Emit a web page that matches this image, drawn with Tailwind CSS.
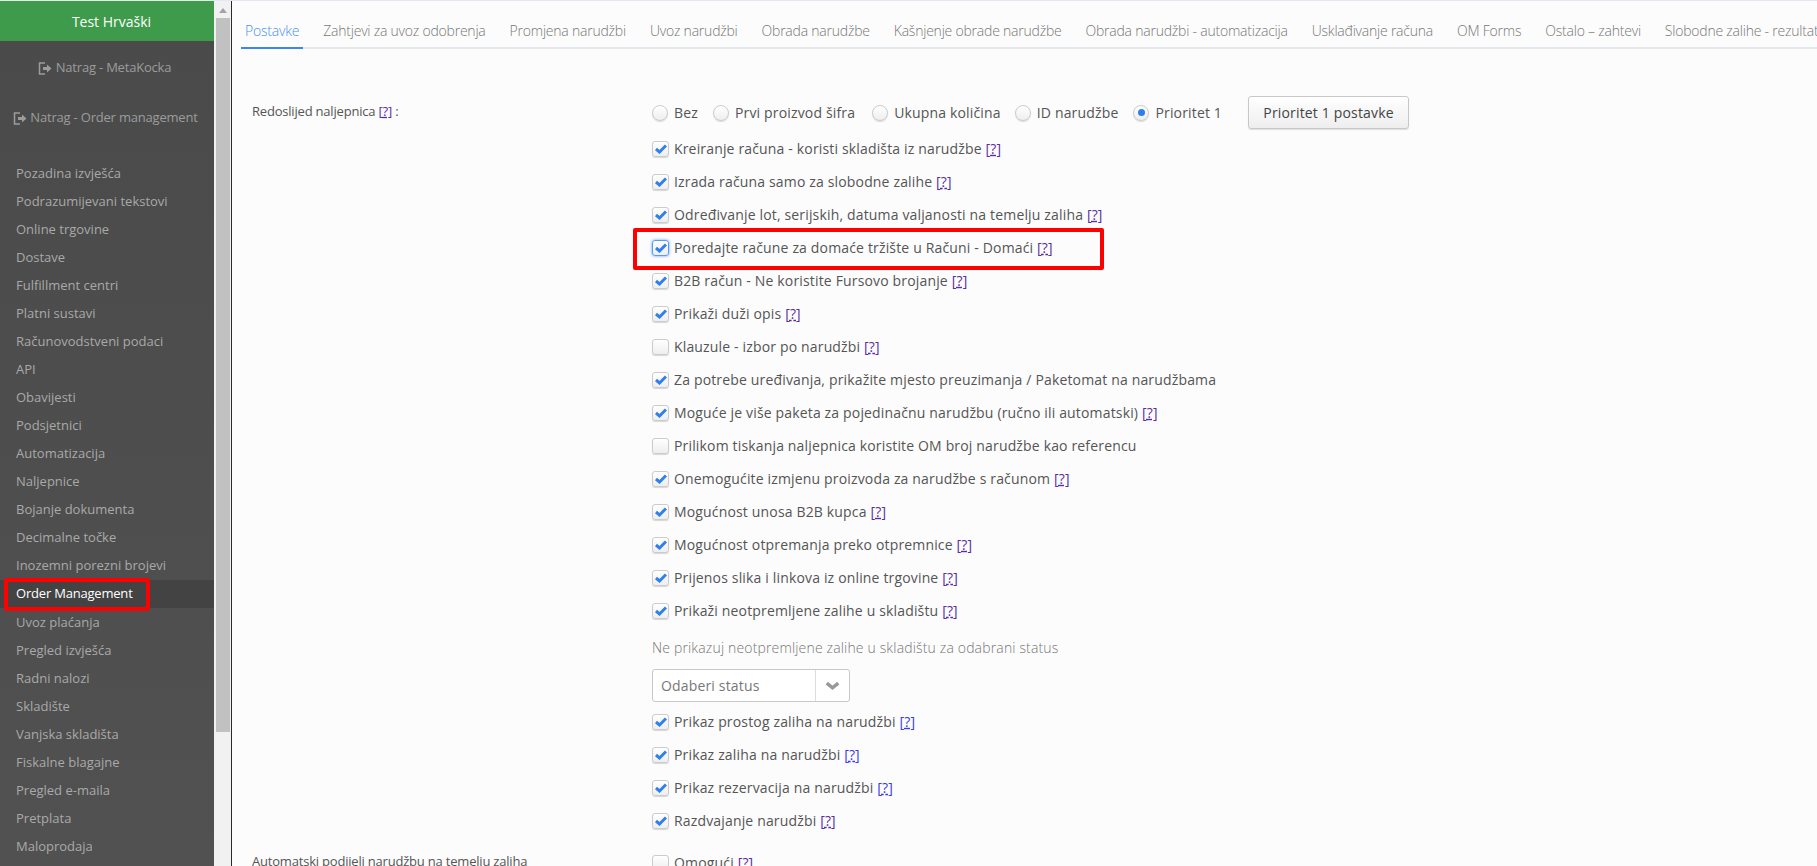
<!DOCTYPE html>
<html lang="hr">
<head>
    <meta charset="UTF-8">
    <meta name="viewport" content="width=device-width, initial-scale=1.0">
    <title>Order Management - Postavke</title>
    <script src="https://cdn.jsdelivr.net/npm/@tailwindcss/browser@4"></script>
</head>
<body class="h-[866px] overflow-hidden bg-[#fcfcfc] font-['Open_Sans',sans-serif] text-[13px] text-[#555]">
<div class="flex h-full flex-col">
    <div class="h-px bg-[#e3e8f2]"></div>
    <div class="flex min-h-0 flex-1">
        <aside class="flex w-[214px] shrink-0 flex-col bg-gradient-to-b from-[#4a4a4a] to-[#515151] text-[#a9a9a9]">
            <div class="flex h-10 items-center justify-center bg-[#3d9b4b] pl-[9px] text-[14px] text-white">Test Hrvaški</div>
            <a class="mt-0.5 flex h-[50px] items-center justify-center gap-[4px] pr-[5px] tracking-[-0.2px] text-[#9c9c9c]">
                <svg class="h-[13px] w-[14px]" viewBox="0 0 14 13" fill="none"><path d="M7 1H1.500v11H7" stroke="#9c9c9c" stroke-width="1.500"/><path d="M5 5h4V2.500L13.500 6.500 9 10.500V8H5z" fill="#9c9c9c"/></svg>
                <span>Natrag - MetaKocka</span>
            </a>
            <a class="flex h-[50px] items-center justify-center gap-[3px] pr-[3px] tracking-[-0.2px] text-[#9c9c9c]">
                <svg class="h-[13px] w-[14px]" viewBox="0 0 14 13" fill="none"><path d="M7 1H1.500v11H7" stroke="#9c9c9c" stroke-width="1.500"/><path d="M5 5h4V2.500L13.500 6.500 9 10.500V8H5z" fill="#9c9c9c"/></svg>
                <span>Natrag - Order management</span>
            </a>
            <nav class="mt-[17px] flex flex-col [&>a]:flex [&>a]:h-7 [&>a]:items-center [&>a]:pl-4">
                <a>Pozadina izvješća</a>
                <a>Podrazumijevani tekstovi</a>
                <a>Online trgovine</a>
                <a>Dostave</a>
                <a>Fulfillment centri</a>
                <a>Platni sustavi</a>
                <a>Računovodstveni podaci</a>
                <a>API</a>
                <a>Obavijesti</a>
                <a>Podsjetnici</a>
                <a>Automatizacija</a>
                <a>Naljepnice</a>
                <a>Bojanje dokumenta</a>
                <a>Decimalne točke</a>
                <a>Inozemni porezni brojevi</a>
                <a class="relative mb-px bg-[#434343] tracking-[-0.2px] text-white">
                    Order Management
                    <span class="absolute top-[-2px] left-1 h-[33px] w-[146px] rounded-[3px] border-4 border-[#f00]"></span>
                </a>
                <a>Uvoz plaćanja</a>
                <a>Pregled izvješća</a>
                <a>Radni nalozi</a>
                <a>Skladište</a>
                <a>Vanjska skladišta</a>
                <a>Fiskalne blagajne</a>
                <a>Pregled e-maila</a>
                <a>Pretplata</a>
                <a>Maloprodaja</a>
            </nav>
        </aside>

        <div class="flex w-[17px] shrink-0 flex-col items-center bg-[#f1f1f1]">
            <div class="mt-[7px] h-0 w-0 border-x-[4px] border-b-[5px] border-x-transparent border-b-[#a3a3a3]"></div>
            <div class="mt-[5px] h-[714px] w-[14px] bg-[#c1c1c1]"></div>
        </div>

        <main class="min-w-0 flex-1 overflow-hidden border-l-[1px] border-[#2a2a2a] pl-[9px] text-[14px] tracking-[0.16px]">
            <div class="mt-[9px] flex h-[39px] w-[1700px] border-b-2 border-[#e4e7ec] text-[14px] font-light tracking-[-0.22px] whitespace-nowrap text-[#777]">
                <a class="-mb-0.5 border-b-2 border-[#3b87ee] px-1 pt-[10px] text-[#4a90f0]">Postavke</a>
                <a class="ml-4 px-1 pt-[10px]">Zahtjevi za uvoz odobrenja</a>
                <a class="ml-4 px-1 pt-[10px]">Promjena narudžbi</a>
                <a class="ml-4 px-1 pt-[10px]">Uvoz narudžbi</a>
                <a class="ml-4 px-1 pt-[10px]">Obrada narudžbe</a>
                <a class="ml-4 px-1 pt-[10px]">Kašnjenje obrade narudžbe</a>
                <a class="ml-4 px-1 pt-[10px]">Obrada narudžbi - automatizacija</a>
                <a class="ml-4 px-1 pt-[10px]">Usklađivanje računa</a>
                <a class="ml-4 px-1 pt-[10px]">OM Forms</a>
                <a class="ml-4 px-1 pt-[10px]">Ostalo – zahtevi</a>
                <a class="ml-4 px-1 pt-[10px]">Slobodne zalihe - rezultati</a>
            </div>

            <div class="mt-[47px] flex pl-[11px]">
                <div class="w-[400px] shrink-0 pt-[6px] text-[13px] leading-[18px] tracking-[-0.2px]">Redoslijed naljepnica <a class="text-[#5b2d9e]">[<span class="underline decoration-dashed">?</span>]</a> :</div>
                <div>
                    <!-- radios + button -->
                    <div class="flex h-[33px] items-center">
                        <span class="h-4 w-4 rounded-full border border-[#ccc] bg-gradient-to-b from-white to-[#eee] shadow-[0_1px_1px_rgba(0,0,0,0.15)]"></span>
                        <span class="ml-[6px]">Bez</span>
                        <span class="ml-[15px] h-4 w-4 rounded-full border border-[#ccc] bg-gradient-to-b from-white to-[#eee] shadow-[0_1px_1px_rgba(0,0,0,0.15)]"></span>
                        <span class="ml-[6px]">Prvi proizvod šifra</span>
                        <span class="ml-[17px] h-4 w-4 rounded-full border border-[#ccc] bg-gradient-to-b from-white to-[#eee] shadow-[0_1px_1px_rgba(0,0,0,0.15)]"></span>
                        <span class="ml-[6px]">Ukupna količina</span>
                        <span class="ml-[14px] h-4 w-4 rounded-full border border-[#ccc] bg-gradient-to-b from-white to-[#eee] shadow-[0_1px_1px_rgba(0,0,0,0.15)]"></span>
                        <span class="ml-[6px]">ID narudžbe</span>
                        <span class="ml-[15px] flex h-4 w-4 items-center justify-center rounded-full border border-[#ccc] bg-gradient-to-b from-white to-[#eee] shadow-[0_1px_1px_rgba(0,0,0,0.15)]"><span class="h-[7px] w-[7px] rounded-full bg-[#2f7fe8]"></span></span>
                        <span class="ml-[6px]">Prioritet 1</span>
                        <button class="ml-[26px] h-[33px] w-[161px] rounded-[3px] border border-[#c8c8c8] bg-gradient-to-b from-white to-[#eee] text-[#444] shadow-[0_1px_1px_rgba(0,0,0,0.12)]">Prioritet 1 postavke</button>
                    </div>

                    <div class="flex flex-col [&>label]:flex [&>label]:h-[33px] [&>label]:items-center [&>label]:gap-[5px] [&_b]:flex [&_b]:h-4 [&_b]:w-[17px] [&_b]:items-center [&_b]:justify-center [&_b]:rounded-[3px] [&_b]:border [&_b]:border-[#ccc] [&_b]:bg-gradient-to-b [&_b]:from-white [&_b]:to-[#eee] [&_b]:shadow-[0_1px_1px_rgba(0,0,0,0.15)] [&_svg]:h-[10px] [&_svg]:w-[12px] [&_a]:text-[#5b2d9e] [&_i]:not-italic [&_i]:underline [&_i]:decoration-dashed">
                        <label class="mt-[3px]"><b><svg viewBox="0 0 12 10"><path d="M1 5l3.500 3L11 1.500" fill="none" stroke="#2f80ed" stroke-width="3"/></svg></b><span>Kreiranje računa - koristi skladišta iz narudžbe <a>[<i>?</i>]</a></span></label>
                        <label><b><svg viewBox="0 0 12 10"><path d="M1 5l3.500 3L11 1.500" fill="none" stroke="#2f80ed" stroke-width="3"/></svg></b><span>Izrada računa samo za slobodne zalihe <a>[<i>?</i>]</a></span></label>
                        <label><b><svg viewBox="0 0 12 10"><path d="M1 5l3.500 3L11 1.500" fill="none" stroke="#2f80ed" stroke-width="3"/></svg></b><span>Određivanje lot, serijskih, datuma valjanosti na temelju zaliha <a>[<i>?</i>]</a></span></label>
                        <label class="relative"><b class="!border-[#5a9bf0] !shadow-[0_0_3px_#5a9bf0]"><svg viewBox="0 0 12 10"><path d="M1 5l3.500 3L11 1.500" fill="none" stroke="#2f80ed" stroke-width="3"/></svg></b><span>Poredajte račune za domaće tržište u Računi - Domaći <a>[<i>?</i>]</a></span>
                            <span class="absolute top-[-3px] left-[-19px] h-[42px] w-[471px] rounded-[2px] border-[4px] border-[#f00]"></span>
                        </label>
                        <label><b><svg viewBox="0 0 12 10"><path d="M1 5l3.500 3L11 1.500" fill="none" stroke="#2f80ed" stroke-width="3"/></svg></b><span>B2B račun - Ne koristite Fursovo brojanje <a>[<i>?</i>]</a></span></label>
                        <label><b><svg viewBox="0 0 12 10"><path d="M1 5l3.500 3L11 1.500" fill="none" stroke="#2f80ed" stroke-width="3"/></svg></b><span>Prikaži duži opis <a>[<i>?</i>]</a></span></label>
                        <label><b></b><span>Klauzule - izbor po narudžbi <a>[<i>?</i>]</a></span></label>
                        <label><b><svg viewBox="0 0 12 10"><path d="M1 5l3.500 3L11 1.500" fill="none" stroke="#2f80ed" stroke-width="3"/></svg></b><span>Za potrebe uređivanja, prikažite mjesto preuzimanja / Paketomat na narudžbama</span></label>
                        <label><b><svg viewBox="0 0 12 10"><path d="M1 5l3.500 3L11 1.500" fill="none" stroke="#2f80ed" stroke-width="3"/></svg></b><span>Moguće je više paketa za pojedinačnu narudžbu (ručno ili automatski) <a>[<i>?</i>]</a></span></label>
                        <label><b></b><span>Prilikom tiskanja naljepnica koristite OM broj narudžbe kao referencu</span></label>
                        <label><b><svg viewBox="0 0 12 10"><path d="M1 5l3.500 3L11 1.500" fill="none" stroke="#2f80ed" stroke-width="3"/></svg></b><span>Onemogućite izmjenu proizvoda za narudžbe s računom <a>[<i>?</i>]</a></span></label>
                        <label><b><svg viewBox="0 0 12 10"><path d="M1 5l3.500 3L11 1.500" fill="none" stroke="#2f80ed" stroke-width="3"/></svg></b><span>Mogućnost unosa B2B kupca <a>[<i>?</i>]</a></span></label>
                        <label><b><svg viewBox="0 0 12 10"><path d="M1 5l3.500 3L11 1.500" fill="none" stroke="#2f80ed" stroke-width="3"/></svg></b><span>Mogućnost otpremanja preko otpremnice <a>[<i>?</i>]</a></span></label>
                        <label><b><svg viewBox="0 0 12 10"><path d="M1 5l3.500 3L11 1.500" fill="none" stroke="#2f80ed" stroke-width="3"/></svg></b><span>Prijenos slika i linkova iz online trgovine <a>[<i>?</i>]</a></span></label>
                        <label><b><svg viewBox="0 0 12 10"><path d="M1 5l3.500 3L11 1.500" fill="none" stroke="#2f80ed" stroke-width="3"/></svg></b><span>Prikaži neotpremljene zalihe u skladištu <a>[<i>?</i>]</a></span></label>

                        <p class="mt-3 leading-[18px] font-light text-[#777]">Ne prikazuj neotpremljene zalihe u skladištu za odabrani status</p>
                        <div class="mt-3 mb-[3px] flex h-[33px] w-[198px] rounded-[3px] border border-[#c8c8c8] bg-white text-[#777]">
                            <span class="flex flex-1 items-center pl-2">Odaberi status</span>
                            <span class="flex w-[34px] items-center justify-center border-l border-[#ddd]">
                                <svg class="!h-[10px] !w-[15px]" viewBox="0 0 13 8"><path d="M1.500 1.500l5 4 5-4" fill="none" stroke="#999" stroke-width="3"/></svg>
                            </span>
                        </div>

                        <label class="[&_a]:!text-[#3a3af0]"><b><svg viewBox="0 0 12 10"><path d="M1 5l3.500 3L11 1.500" fill="none" stroke="#2f80ed" stroke-width="3"/></svg></b><span>Prikaz prostog zaliha na narudžbi <a>[<i>?</i>]</a></span></label>
                        <label class="[&_a]:!text-[#3a3af0]"><b><svg viewBox="0 0 12 10"><path d="M1 5l3.500 3L11 1.500" fill="none" stroke="#2f80ed" stroke-width="3"/></svg></b><span>Prikaz zaliha na narudžbi <a>[<i>?</i>]</a></span></label>
                        <label class="[&_a]:!text-[#3a3af0]"><b><svg viewBox="0 0 12 10"><path d="M1 5l3.500 3L11 1.500" fill="none" stroke="#2f80ed" stroke-width="3"/></svg></b><span>Prikaz rezervacija na narudžbi <a>[<i>?</i>]</a></span></label>
                        <label><b><svg viewBox="0 0 12 10"><path d="M1 5l3.500 3L11 1.500" fill="none" stroke="#2f80ed" stroke-width="3"/></svg></b><span>Razdvajanje narudžbi <a>[<i>?</i>]</a></span></label>
                    </div>
                </div>
            </div>

            <div class="mt-[9px] flex pl-[11px]">
                <div class="w-[400px] shrink-0 pt-[6px] text-[13px] leading-[18px] tracking-[-0.2px]">Automatski podijeli narudžbu na temelju zaliha</div>
                <label class="flex h-[33px] items-center gap-[5px] [&_a]:text-[#5b2d9e]">
                    <b class="h-4 w-[17px] rounded-[3px] border border-[#ccc] bg-gradient-to-b from-white to-[#eee]"></b>
                    <span>Omogući <a>[<span class="underline decoration-dashed">?</span>]</a></span>
                </label>
            </div>
        </main>
    </div>
</div>
</body>
</html>
